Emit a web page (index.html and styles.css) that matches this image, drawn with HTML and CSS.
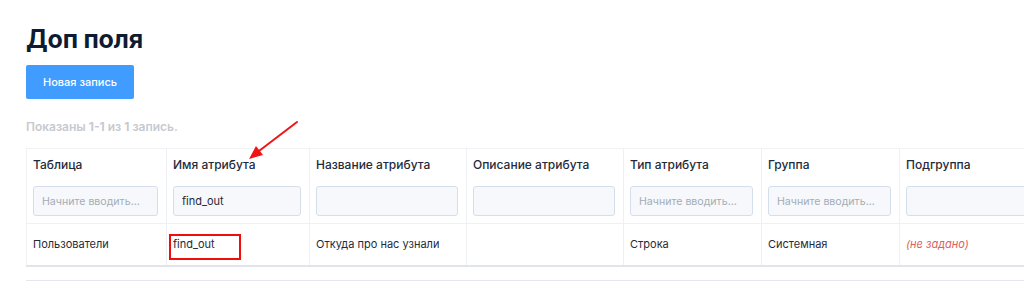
FILE: index.html
```html
<!DOCTYPE html>
<html lang="ru">

<head>
    <meta charset="UTF-8">
    <title>Доп поля</title>
    <link rel="stylesheet" href="styles.css">
</head>

<body>
    <div class="page">
        <h1>Доп поля</h1>
        <button class="btn-new">Новая запись</button>
        <div class="summary">Показаны <b>1-1</b> из <b>1</b> запись.</div>

        <table class="grid">
            <colgroup>
                <col style="width: 140px">
                <col style="width: 143px">
                <col style="width: 157px">
                <col style="width: 157px">
                <col style="width: 138px">
                <col style="width: 138px">
                <col style="width: 150px">
            </colgroup>
            <thead>
                <tr class="heads">
                    <th>Таблица</th>
                    <th>Имя атрибута</th>
                    <th>Название атрибута</th>
                    <th>Описание атрибута</th>
                    <th>Тип атрибута</th>
                    <th>Группа</th>
                    <th>Подгруппа</th>
                </tr>
                <tr class="filters">
                    <td><input type="text" placeholder="Начните вводить..."></td>
                    <td><input type="text" value="find_out"></td>
                    <td><input type="text"></td>
                    <td><input type="text"></td>
                    <td><input type="text" placeholder="Начните вводить..."></td>
                    <td><input type="text" placeholder="Начните вводить..."></td>
                    <td><input type="text"></td>
                </tr>
            </thead>
            <tbody>
                <tr>
                    <td>Пользователи</td>
                    <td class="marked">find_out<span class="mark-box"></span></td>
                    <td>Откуда про нас узнали</td>
                    <td></td>
                    <td>Строка</td>
                    <td>Системная</td>
                    <td><span class="not-set">(не задано)</span></td>
                </tr>
            </tbody>
        </table>
        <div class="footer-line"></div>
    </div>

    <!-- стрелка-пометка поверх таблицы -->
    <svg class="arrow" width="1024" height="281" viewBox="0 0 1024 281">
        <line x1="297" y1="122" x2="259" y2="151" stroke="#f11414" stroke-width="2" stroke-linecap="round"/>
        <polygon points="249,159 256,146 263,155" fill="#f11414"/>
    </svg>
</body>

</html>
```

FILE: styles.css
```css
html,
body {
    margin: 0;
    padding: 0;
    overflow: hidden;
    background: #fff;
}

body {
    font-family: Inter, "Noto Sans", sans-serif;
    color: #1f2b3a;
}

.page {
    padding: 24px 0 0 26px;
    width: 1100px;
}

h1 {
    margin: 0;
    font-size: 25px;
    line-height: 30px;
    font-weight: 700;
    color: #0e1c33;
    letter-spacing: -0.2px;
}

.btn-new {
    display: block;
    margin-top: 11px;
    width: 108px;
    height: 34px;
    border: none;
    border-radius: 2px;
    background-color: #409cff;
    color: #fff;
    font-family: inherit;
    font-size: 11px;
    font-weight: 500;
    cursor: pointer;
}

.summary {
    margin-top: 20px;
    font-size: 12px;
    line-height: 16px;
    font-weight: 600;
    color: #c6cad0;
}

.summary b {
    font-weight: 700;
}

.grid {
    margin-top: 13px;
    border-collapse: collapse;
    table-layout: fixed;
    width: 1023px;
    border-top: 1px solid #f0f2f5;
    border-left: 1px solid #f0f2f5;
}

.grid th,
.grid td {
    border-right: 1px solid #eef1f4;
    text-align: left;
    vertical-align: top;
}

.heads th {
    padding: 8px 7px 6px 6px;
    font-size: 12px;
    line-height: 15px;
    font-weight: 500;
    color: #1f2b3a;
}

.filters td {
    padding: 8px 8px 7px 6px;
    border-bottom: 1px solid #eef1f4;
}

.filters input {
    box-sizing: border-box;
    width: 100%;
    height: 30px;
    padding: 0 8px;
    border: 1px solid #d5dfeb;
    border-radius: 3px;
    background: #f6f8fb;
    font-family: inherit;
    font-size: 11px;
    color: #1f2b3a;
}

.filters input::placeholder {
    font-size: 10.6px;
    color: #a4acb6;
}

tbody td {
    padding: 12px 6px;
    font-size: 11px;
    line-height: 17px;
    color: #1f2b3a;
    border-bottom: 2px solid #e1e5ea;
}

.marked {
    position: relative;
}

.mark-box {
    position: absolute;
    left: 2px;
    top: 10px;
    width: 72px;
    height: 26px;
    box-sizing: border-box;
    border: 2px solid #f20d0d;
}

.not-set {
    font-style: italic;
    color: #dc6060;
}

.footer-line {
    margin-top: 13px;
    border-top: 1px solid #e4e7eb;
}

.arrow {
    position: absolute;
    left: 0;
    top: 0;
    pointer-events: none;
}
```
